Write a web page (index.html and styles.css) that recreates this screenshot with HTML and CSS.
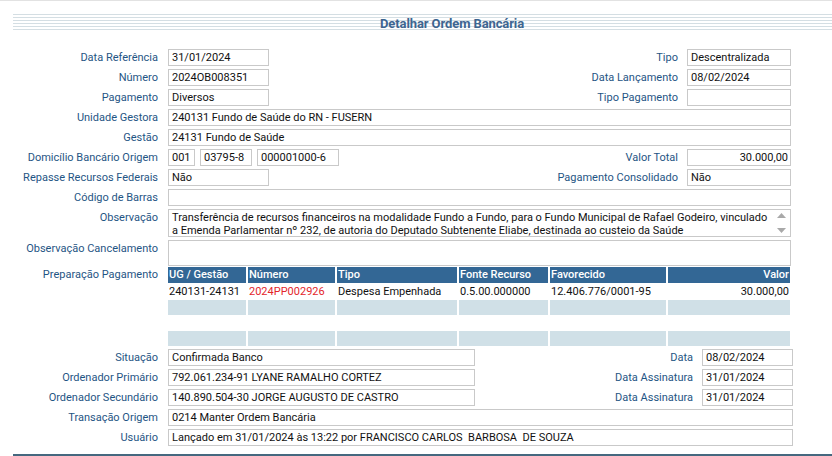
FILE: index.html
```html
<!DOCTYPE html>
<html lang="pt-BR">
<head>
<meta charset="utf-8">
<title>Detalhar Ordem Bancária</title>
<link rel="stylesheet" href="styles.css">
</head>
<body>
<div class="page">
  <div class="titlebar"><h1 class="title">Detalhar Ordem Bancária</h1></div>

  <div class="form">
    <div class="row">
      <span class="lbl">Data Referência</span>
      <div class="field w-date">31/01/2024</div>
      <span class="fill"></span>
      <span class="lbl-r">Tipo</span>
      <div class="field w-side">Descentralizada</div>
    </div>
    <div class="row">
      <span class="lbl">Número</span>
      <div class="field w-date">2024OB008351</div>
      <span class="fill"></span>
      <span class="lbl-r">Data Lançamento</span>
      <div class="field w-side">08/02/2024</div>
    </div>
    <div class="row">
      <span class="lbl">Pagamento</span>
      <div class="field w-date">Diversos</div>
      <span class="fill"></span>
      <span class="lbl-r">Tipo Pagamento</span>
      <div class="field w-side"></div>
    </div>
    <div class="row">
      <span class="lbl">Unidade Gestora</span>
      <div class="field grow">240131 Fundo de Saúde do RN - FUSERN</div>
    </div>
    <div class="row">
      <span class="lbl">Gestão</span>
      <div class="field grow">24131 Fundo de Saúde</div>
    </div>
    <div class="row">
      <span class="lbl">Domicílio Bancário Origem</span>
      <div class="bank">
        <div class="field w-bank">001</div>
        <div class="field w-ag">03795-8</div>
        <div class="field w-acc">000001000-6</div>
      </div>
      <span class="fill"></span>
      <span class="lbl-r">Valor Total</span>
      <div class="field w-side num">30.000,00</div>
    </div>
    <div class="row">
      <span class="lbl">Repasse Recursos Federais</span>
      <div class="field w-date">Não</div>
      <span class="fill"></span>
      <span class="lbl-r">Pagamento Consolidado</span>
      <div class="field w-side">Não</div>
    </div>
    <div class="row">
      <span class="lbl">Código de Barras</span>
      <div class="field grow"></div>
    </div>
    <div class="row">
      <span class="lbl">Observação</span>
      <div class="field grow area area-obs">
        <p class="area-text">Transferência de recursos financeiros na modalidade Fundo a Fundo, para o Fundo Municipal de Rafael Godeiro, vinculado a Emenda Parlamentar nº 232, de autoria do Deputado Subtenente Eliabe, destinada ao custeio da Saúde</p>
        <div class="scroll">
          <svg width="9" height="20" viewBox="0 0 9 20"><path d="M4.5 0 L9 5 L0 5 Z" fill="#a9a9a9"/><path d="M0 15 L9 15 L4.5 20 Z" fill="#a9a9a9"/></svg>
        </div>
      </div>
    </div>
    <div class="row row-cancel">
      <span class="lbl">Observação Cancelamento</span>
      <div class="field grow area area-cancel"></div>
    </div>
    <div class="row row-table">
      <span class="lbl lbl-table">Preparação Pagamento</span>
      <table class="grid">
        <colgroup>
          <col class="c-ug"><col class="c-num"><col class="c-tipo"><col class="c-fonte"><col class="c-fav"><col>
        </colgroup>
        <thead>
          <tr>
            <th>UG / Gestão</th><th>Número</th><th>Tipo</th><th>Fonte Recurso</th><th>Favorecido</th><th class="right">Valor</th>
          </tr>
        </thead>
        <tbody>
          <tr class="data">
            <td>240131-24131</td><td class="red">2024PP002926</td><td>Despesa Empenhada</td><td>0.5.00.000000</td><td>12.406.776/0001-95</td><td class="right">30.000,00</td>
          </tr>
          <tr class="shade"><td></td><td></td><td></td><td></td><td></td><td></td></tr>
          <tr class="blank"><td></td><td></td><td></td><td></td><td></td><td></td></tr>
          <tr class="shade"><td></td><td></td><td></td><td></td><td></td><td></td></tr>
        </tbody>
      </table>
    </div>
  </div>

  <div class="form form-lower">
    <div class="row">
      <span class="lbl">Situação</span>
      <div class="field w-wide">Confirmada Banco</div>
      <span class="fill"></span>
      <span class="lbl-r">Data</span>
      <div class="field w-side2">08/02/2024</div>
    </div>
    <div class="row">
      <span class="lbl">Ordenador Primário</span>
      <div class="field w-wide">792.061.234-91 LYANE RAMALHO CORTEZ</div>
      <span class="fill"></span>
      <span class="lbl-r">Data Assinatura</span>
      <div class="field w-side2">31/01/2024</div>
    </div>
    <div class="row">
      <span class="lbl">Ordenador Secundário</span>
      <div class="field w-wide">140.890.504-30 JORGE AUGUSTO DE CASTRO</div>
      <span class="fill"></span>
      <span class="lbl-r">Data Assinatura</span>
      <div class="field w-side2">31/01/2024</div>
    </div>
    <div class="row">
      <span class="lbl">Transação Origem</span>
      <div class="field grow">0214 Manter Ordem Bancária</div>
    </div>
    <div class="row">
      <span class="lbl">Usuário</span>
      <div class="field grow">Lançado em 31/01/2024 às 13:22 por FRANCISCO CARLOS&nbsp; BARBOSA&nbsp; DE SOUZA</div>
    </div>
  </div>
  <div class="footer-rule"></div>
</div>
</body>
</html>
```

FILE: styles.css
```css
html, body {
  margin: 0;
  padding: 0;
  background: #ffffff;
}

body {
  font-family: Roboto, "Liberation Sans", Arial, sans-serif;
  font-size: 11px;
  color: #111111;
  width: 832px;
  height: 456px;
  overflow: hidden;
}

.page {
  border-top: 1px solid #e2e2e2;
}

/* striped heading band */
.titlebar {
  margin: 13px 0 0 13px;
  height: 16px;
  background: repeating-linear-gradient(to bottom, #d4dee3 0, #d4dee3 1px, transparent 1px, transparent 3px);
  display: flex;
  align-items: flex-start;
  padding-left: 367px;
}

.title {
  margin: 0;
  padding-top: 1px;
  font-size: 13px;
  font-weight: 700;
  color: #3d6590;
  line-height: 17px;
  letter-spacing: -0.1px;
}

.form {
  margin-top: 19px;
  padding-right: 41px;
}

.form-lower {
  margin-top: 3px;
  padding-right: 39px;
}

.row {
  display: flex;
  align-items: flex-start;
  margin-bottom: 3px;
}

.lbl {
  width: 158px;
  margin-right: 10px;
  text-align: right;
  color: #1f5584;
  line-height: 17px;
  white-space: nowrap;
  flex: none;
}

.lbl-r {
  color: #1f5584;
  line-height: 17px;
  margin-right: 9px;
  white-space: nowrap;
}

.fill {
  flex: 1;
}

.field {
  box-sizing: border-box;
  height: 17px;
  border: 1px solid #c9c9c9;
  padding: 0 3px;
  line-height: 15px;
  white-space: nowrap;
  overflow: hidden;
  flex: none;
}

.grow { flex: 1; }
.w-date { width: 101px; }
.w-side { width: 104px; }
.w-side2 { width: 91px; }
.w-wide { width: 307px; }
.num { text-align: right; padding-right: 2px; }

.bank {
  display: flex;
  gap: 5px;
}
.w-bank { width: 27px; }
.w-ag { width: 52px; }
.w-acc { width: 82px; }

/* text areas */
.area {
  position: relative;
  white-space: normal;
}

.area-obs {
  height: 28px;
  padding: 1px 19px 0 3px;
}

.area-text {
  margin: 0;
  line-height: 13px;
}

.scroll {
  position: absolute;
  right: 4px;
  top: 3px;
  width: 9px;
  height: 20px;
}

.scroll svg { display: block; }

.row-cancel { margin-bottom: 1px; }
.area-cancel { height: 26px; }

/* payment preparation grid */
.row-table { margin-bottom: 0; }
.lbl-table { line-height: 16px; }

.grid {
  flex: 1;
  border-collapse: collapse;
  table-layout: fixed;
  margin-right: 1px;
}

.c-ug { width: 79px; }
.c-num { width: 89px; }
.c-tipo { width: 122px; }
.c-fonte { width: 91px; }
.c-fav { width: 118px; }

.grid th {
  background: #336795;
  color: #ffffff;
  font-weight: 500;
  text-align: left;
  height: 16px;
  padding: 0 1px;
  border-right: 2px solid #ffffff;
  line-height: 16px;
  white-space: nowrap;
  overflow: hidden;
}

.grid th:last-child,
.grid td:last-child { border-right: 0; }

.grid td {
  padding: 0 1px;
  white-space: nowrap;
  overflow: hidden;
  border-right: 2px solid transparent;
}

.grid .data td { height: 17px; line-height: 17px; }
.grid .shade td { height: 15px; background: #d0e0e7; border-right-color: #ffffff; }
.grid .blank td { height: 16px; }

.grid .right { text-align: right; }
.grid .red { color: #e3262b; }

.footer-rule {
  margin: 8px 0 0 13px;
  height: 2px;
  background: #45687f;
}
```
